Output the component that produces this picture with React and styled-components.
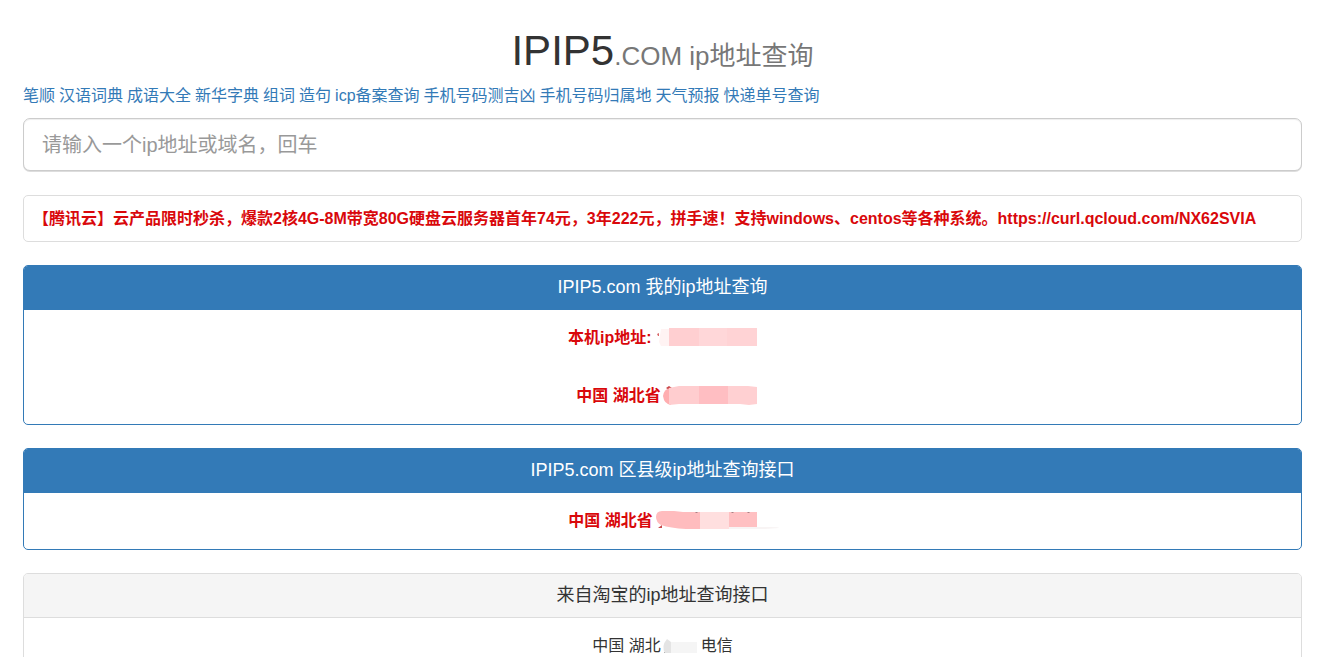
import React from 'react';
import styled, { createGlobalStyle } from 'styled-components';

const GlobalStyle = createGlobalStyle`
  *, *::before, *::after { box-sizing: border-box; }
  body {
    margin: 0;
    background: #fff;
    color: #333;
    font: 16px/22px "Liberation Sans", "Noto Sans CJK SC", sans-serif;
  }
`;

const Page = styled.main`
  padding: 27px 23px 0;
`;

const Title = styled.h1`
  margin: 0 0 10px;
  font-size: 42px;
  font-weight: 400;
  line-height: 48px;
  text-align: center;
`;

const Suffix = styled.small`
  font-size: 26px;
  line-height: 1;
  color: #777;
`;

const Links = styled.nav`
  display: flex;
  flex-wrap: wrap;
  gap: 0 4px;
  margin-bottom: 11px;
`;

const NavLink = styled.a`
  color: #337ab7;
  text-decoration: none;
  &:hover { text-decoration: underline; }
`;

const SearchInput = styled.input`
  display: block;
  width: 100%;
  height: 53px;
  margin-bottom: 24px;
  padding: 11px 18px 9px;
  border: 1px solid #ccc;
  border-radius: 7px;
  background: #fff;
  box-shadow: inset 0 1px 1px rgba(0, 0, 0, 0.07), 0 1px 0 #ddd;
  color: #555;
  font: inherit;
  font-size: 20px;
  line-height: 28px;
  outline: none;
  &::placeholder { color: #999; opacity: 1; }
`;

const Notice = styled.section`
  margin-bottom: 23px;
  padding: 12px 17px 11px;
  border: 1px solid #ddd;
  border-radius: 5px;
  text-spacing-trim: trim-start;
`;

const NoticeLink = styled.a`
  color: #d9080b;
  font-weight: 700;
  text-decoration: none;
`;

const Panel = styled.section`
  margin-bottom: 23px;
  border: 1px solid ${(p) => (p.$primary ? '#337ab7' : '#ddd')};
  border-radius: 5px;
  overflow: hidden;
  text-align: center;
`;

const PanelTitle = styled.h2`
  margin: 0;
  padding: 10px 17px 11px;
  border-bottom: 1px solid ${(p) => (p.$primary ? '#337ab7' : '#ddd')};
  background: ${(p) => (p.$primary ? '#337ab7' : '#f5f5f5')};
  color: ${(p) => (p.$primary ? '#fff' : '#333')};
  font-size: 18px;
  font-weight: 400;
  line-height: 22px;
`;

const PanelBody = styled.div`
  display: flex;
  flex-direction: column;
  gap: 36px;
  padding: 17px;
`;

const Result = styled.p`
  display: flex;
  justify-content: center;
  margin: 0;
  white-space: pre;
  color: ${(p) => (p.$strong ? '#d9080b' : '#333')};
  font-weight: ${(p) => (p.$strong ? 700 : 400)};
`;

const Smudge = styled.svg`
  display: block;
  flex: none;
  height: 22px;
  overflow: visible;
`;

const links = [
  '笔顺', '汉语词典', '成语大全', '新华字典', '组词', '造句', 'icp备案查询',
  '手机号码测吉凶', '手机号码归属地', '天气预报', '快递单号查询',
];

export default function App() {
  return (
    <>
      <GlobalStyle />
      <Page>
        <Title>IPIP5<Suffix>.COM ip地址查询</Suffix></Title>
        <Links>
          {links.map((name) => (
            <NavLink href="#" key={name}>{name}</NavLink>
          ))}
        </Links>
        <SearchInput
          type="text"
          aria-label="ip地址或域名"
          placeholder="请输入一个ip地址或域名，回车"
        />
        <Notice>
          <NoticeLink href="#">
            【腾讯云】云产品限时秒杀，爆款2核4G-8M带宽80G硬盘云服务器首年74元，3年222元，拼手速！支持windows、centos等各种系统。https://curl.qcloud.com/NX62SVIA
          </NoticeLink>
        </Notice>

        <Panel $primary>
          <PanelTitle $primary>IPIP5.com 我的ip地址查询</PanelTitle>
          <PanelBody>
            <Result $strong>
              本机ip地址:{' '}
              <Smudge width="101" viewBox="0 0 101 22" aria-hidden="true">
                <path d="M1 7l2-1v3h-1z" fill="#d9686a" />
                <path d="M5 2h8v17H5l-2-4z" fill="#fff3f3" />
                <path d="M13 1h30v18H13z" fill="#ffcfd1" />
                <path d="M43 1h28v18H43z" fill="#ffd7d9" />
                <path d="M71 1h30v18H71z" fill="#ffd3d5" />
              </Smudge>
            </Result>
            <Result $strong>
              中国 湖北省
              <Smudge width="88" viewBox="0 0 88 22" aria-hidden="true">
                <path d="M5 3l3-2 3 2-3 2z" fill="#c9484a" />
                <path d="M9 3q-6 1-7 8 1 8 8 9z" fill="#ffaeb0" />
                <path d="M8 3l10-2h20v18H18l-10 1z" fill="#ffcdcf" />
                <path d="M38 1h29v18H38z" fill="#ffbec2" />
                <path d="M67 1h20l9 1v17l-8 1-9-1H67z" fill="#ffd0d2" />
              </Smudge>
            </Result>
          </PanelBody>
        </Panel>

        <Panel $primary>
          <PanelTitle $primary>IPIP5.com 区县级ip地址查询接口</PanelTitle>
          <PanelBody>
            <Result $strong>
              中国 湖北省
              <Smudge width="104" viewBox="0 0 104 22" aria-hidden="true">
                <path d="M5 18l4-3v3z" fill="#c9484a" />
                <path d="M9 1h12l9 1h17v17H33q-16-1-25-4-5-3-5-8 0-6 6-6z" fill="#ffbcbe" />
                <path d="M47 2h29v17H47z" fill="#ffdfdf" />
                <path d="M76 2h28v16H76z" fill="#ffc0c2" />
                <path d="M42 2h3l-1 1h-1zM78 2h3l-1 1h-1zM94 2h3l-1 1h-1z" fill="#a98183" />
                <path d="M76 17h41q9 0 9 1l-14 1H76z" fill="#f8f4f4" />
              </Smudge>
            </Result>
          </PanelBody>
        </Panel>

        <Panel>
          <PanelTitle>来自淘宝的ip地址查询接口</PanelTitle>
          <PanelBody>
            <Result>
              中国 湖北
              <Smudge width="40" viewBox="0 0 40 22" aria-hidden="true">
                <path d="M3 18l3-3v3z" fill="#555" />
                <path d="M6 4l4 3v11H4q-4-7 2-14z" fill="#e4e4e4" />
                <path d="M10 7h26v11H10z" fill="#f5f5f5" />
              </Smudge>
              电信
            </Result>
          </PanelBody>
        </Panel>
      </Page>
    </>
  );
}
